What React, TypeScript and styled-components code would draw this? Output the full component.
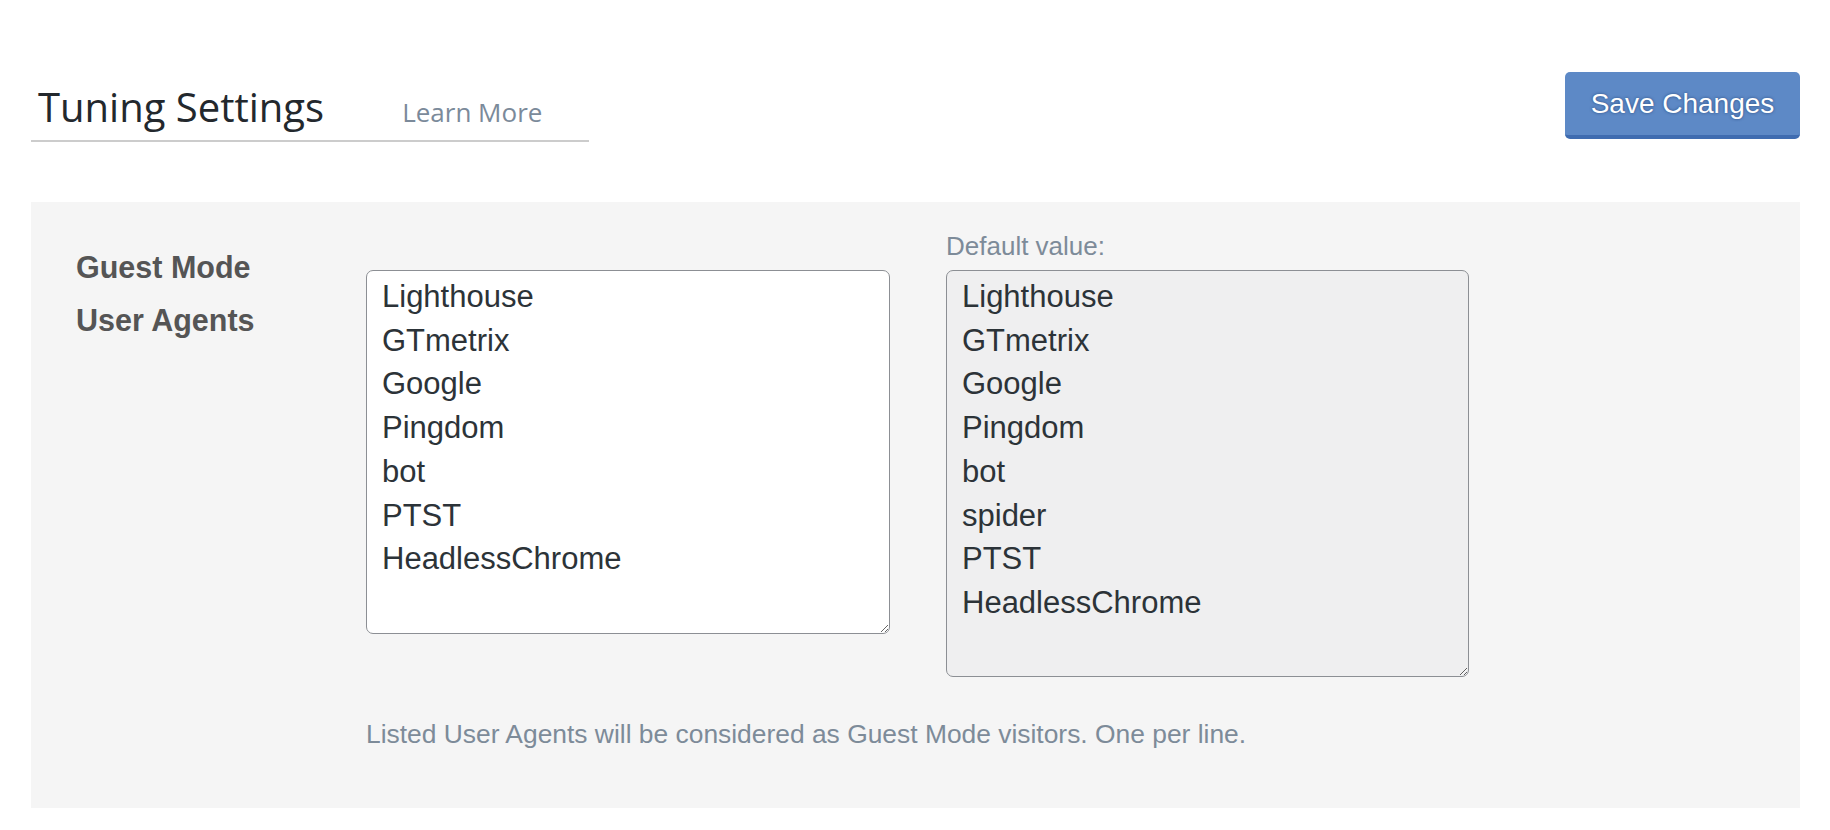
import React from "react";
import styled, { createGlobalStyle } from "styled-components";

const GlobalStyle = createGlobalStyle`
  html, body {
    margin: 0;
    padding: 0;
    background: #ffffff;
  }
  body {
    font-family: "Liberation Sans", Arial, sans-serif;
    color: #2c3338;
  }
`;

const Page = styled.div`
  padding: 72px 30px 0 31px;
`;

const Header = styled.div`
  display: flex;
  justify-content: space-between;
  align-items: flex-start;
`;

const TitleBar = styled.div`
  display: flex;
  align-items: baseline;
  width: 558px;
  margin-top: 7px;
  padding: 0 0 0 7px;
  box-sizing: border-box;
  border-bottom: 2px solid #cccccc;
  line-height: 56px;
  font-family: "Open Sans", "Noto Sans", sans-serif;
`;

const Title = styled.h1`
  margin: 0;
  font-size: 40px;
  font-weight: 400;
  color: #23282d;
`;

const LearnMore = styled.a`
  margin-left: 78px;
  font-size: 26px;
  color: #7b8a9a;
  text-decoration: none;
`;

const SaveButton = styled.button`
  width: 235px;
  height: 67px;
  padding: 0;
  border: none;
  border-bottom: 4px solid #3f6cb0;
  border-radius: 5px;
  background: #5d89c6;
  color: #ffffff;
  font-family: "Liberation Sans", Arial, sans-serif;
  font-size: 28px;
  text-shadow: 0 0 3px rgba(20, 50, 100, 0.7);
  cursor: pointer;
`;

const Panel = styled.div`
  margin-top: 60px;
  background: #f5f5f5;
  padding: 29px 45px 59px 45px;
  display: flex;
`;

const RowLabel = styled.div`
  width: 290px;
  margin-top: 10px;
  font-size: 30.5px;
  line-height: 53px;
  font-weight: 700;
  color: #555555;
`;

const Field = styled.div`
  display: flex;
  flex-direction: column;
`;

const FieldGrid = styled.div`
  display: grid;
  grid-template-columns: 524px 523px;
  column-gap: 56px;
  row-gap: 9px;
  align-items: start;
`;

const Caption = styled.div`
  font-size: 26px;
  line-height: 30px;
  color: #7d8b99;
`;

const Agents = styled.textarea<{ $readonly?: boolean; $height: number }>`
  box-sizing: border-box;
  width: 100%;
  height: ${(p) => p.$height}px;
  margin: 0;
  padding: 4px 14px 8px 15px;
  border: 1px solid #8c8f94;
  border-radius: 7px;
  background: ${(p) => (p.$readonly ? "#efeff0" : "#ffffff")};
  color: #2c3338;
  font-family: "Liberation Sans", Arial, sans-serif;
  font-size: 31px;
  line-height: 43.7px;
  outline: none;
  overflow: hidden;
`;

const Help = styled.p`
  margin: 42px 0 0;
  font-size: 26.4px;
  line-height: 30px;
  color: #7d8b99;
`;

const current = ["Lighthouse", "GTmetrix", "Google", "Pingdom", "bot", "PTST", "HeadlessChrome"];
const defaults = ["Lighthouse", "GTmetrix", "Google", "Pingdom", "bot", "spider", "PTST", "HeadlessChrome"];

export default function App() {
  return (
    <>
      <GlobalStyle />
      <Page>
        <Header>
          <TitleBar>
            <Title>Tuning Settings</Title>
            <LearnMore href="#">Learn More</LearnMore>
          </TitleBar>
          <SaveButton type="button">Save Changes</SaveButton>
        </Header>

        <Panel>
          <RowLabel>
            Guest Mode
            <br />
            User Agents
          </RowLabel>
          <Field>
            <FieldGrid>
              <span />
              <Caption>Default value:</Caption>
              <Agents $height={364} defaultValue={current.join("\n")} />
              <Agents $height={407} $readonly readOnly defaultValue={defaults.join("\n")} />
            </FieldGrid>
            <Help>Listed User Agents will be considered as Guest Mode visitors. One per line.</Help>
          </Field>
        </Panel>
      </Page>
    </>
  );
}
